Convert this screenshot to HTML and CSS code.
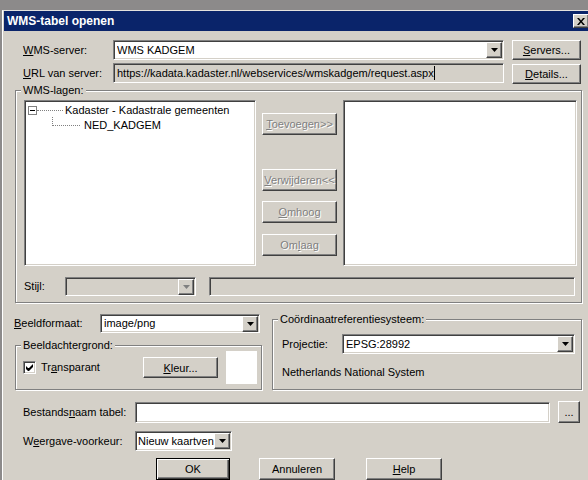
FILE: index.html
```html
<!DOCTYPE html>
<html>
<head>
<meta charset="utf-8">
<link rel="stylesheet" href="styles.css">
</head>
<body>
<div class="dialog">
  <div class="titlebar">
    <span class="title">WMS-tabel openen</span>
    <span class="btn close"><svg width="8" height="7" viewBox="0 0 8 7"><path d="M0 0h2l2 2.5 2-2.5h2l-3 3.5 3 3.5h-2l-2-2.5-2 2.5h-2l3-3.5z" fill="#000"/></svg></span>
  </div>
  <div class="content">
    <div class="row row-server">
      <span class="lbl w-top"><u>W</u>MS-server:</span>
      <div class="field combo w-top-field h20"><span class="val">WMS KADGEM</span><span class="btn arrow"><svg width="7" height="4"><path d="M0 0h7l-3.5 4z" fill="#000"/></svg></span></div>
      <div class="btn side h20"><u>S</u>ervers...</div>
    </div>
    <div class="row row-url">
      <span class="lbl w-top h20"><u>U</u>RL van server:</span>
      <div class="field ro w-top-field h20"><span class="val">https://kadata.kadaster.nl/webservices/wmskadgem/request.aspx</span><span class="caret"></span></div>
      <div class="btn side h20 details"><u>D</u>etails...</div>
    </div>

    <div class="group g-wms">
      <div class="legend">WMS-lagen:</div>
      <div class="wms-main">
        <div class="field tree">
          <div class="node n1"><span class="expander"><span class="minus"></span></span><span class="hline"></span><span class="ntext">Kadaster - Kadastrale gemeenten</span></div>
          <div class="node n2"><span class="elbow"></span><span class="ntext">NED_KADGEM</span></div>
        </div>
        <div class="btncol">
          <div class="btn dis b-add"><span><u>T</u>oevoegen&gt;&gt;</span></div>
          <div class="btn dis b-rem"><span><u>V</u>erwijderen&lt;&lt;</span></div>
          <div class="btn dis b-up"><span><u>O</u>mhoog</span></div>
          <div class="btn dis b-down"><span>Om<u>l</u>aag</span></div>
        </div>
        <div class="field list"></div>
      </div>
      <div class="row stijl-row">
        <span class="lbl w-stijl">Sti<u>j</u>l:</span>
        <div class="field combo disabled w-stijl-combo h19"><span class="val"></span><span class="btn arrow"><svg width="7" height="4"><path d="M0 0h7l-3.5 4z" fill="#808080"/></svg></span></div>
        <div class="field ro w-stijl-text h19"></div>
      </div>
    </div>

    <div class="lower">
      <div class="leftcol">
        <div class="row fmt-row">
          <span class="lbl w-fmt"><u>B</u>eeldformaat:</span>
          <div class="field combo w-fmt-combo h19"><span class="val">image/png</span><span class="btn arrow"><svg width="7" height="4"><path d="M0 0h7l-3.5 4z" fill="#000"/></svg></span></div>
        </div>
        <div class="group g-bg">
          <div class="legend">Beeldachtergrond:</div>
          <div class="row bg-row">
            <span class="check"><svg width="7" height="7" viewBox="0 0 7 7"><path d="M0 2v3l2 2h1l4-4v-3l-4 4h-1z" fill="#000"/></svg></span>
            <span class="lbl w-transp">Tr<u>a</u>nsparant</span>
            <div class="btn kleur"><u>K</u>leur...</div>
            <span class="swatch"></span>
          </div>
        </div>
      </div>
      <div class="group g-crs">
        <div class="legend">Coördinaatreferentiesysteem:</div>
        <div class="row proj-row">
          <span class="lbl w-proj">Projectie:</span>
          <div class="field combo w-proj-combo h20"><span class="val">EPSG:28992</span><span class="btn arrow"><svg width="7" height="4"><path d="M0 0h7l-3.5 4z" fill="#000"/></svg></span></div>
        </div>
        <div class="crs-name">Netherlands National System</div>
      </div>
    </div>

    <div class="row file-row">
      <span class="lbl w-bottom">Bestands<u>n</u>aam tabel:</span>
      <div class="field w-file h21"></div>
      <div class="btn dots">...</div>
    </div>
    <div class="row view-row">
      <span class="lbl w-bottom">W<u>e</u>ergave-voorkeur:</span>
      <div class="field combo w-view h20"><span class="val">Nieuw kaartven</span><span class="btn arrow"><svg width="7" height="4"><path d="M0 0h7l-3.5 4z" fill="#000"/></svg></span></div>
    </div>
    <div class="row action-row">
      <div class="btn default b-ok">OK</div>
      <div class="btn b-cancel">Annuleren</div>
      <div class="btn b-help"><u>H</u>elp</div>
    </div>
  </div>
</div>
</body>
</html>
```
FILE: styles.css
```css
* { box-sizing: border-box; }
html, body { margin: 0; padding: 0; }
body {
  width: 588px;
  height: 480px;
  overflow: hidden;
  background: #8c8a8a;
  font-family: "Liberation Sans", Arial, sans-serif;
  font-size: 11px;
  color: #000;
}
u { text-decoration: underline; text-underline-offset: 1px; }

.dialog {
  margin: 10px 0 0 2px;
  width: 600px;
  height: 470px;
  background: #d4d0c8;
  border-top: 1px solid #e4e2de;
  border-left: 1px solid #fff;
}
.titlebar {
  margin-left: 1px;
  width: 587px;
  height: 20px;
  background: #0a246a;
  color: #fff;
  font-weight: bold;
  font-size: 12px;
  display: flex;
  align-items: center;
  justify-content: space-between;
  padding-left: 3px;
}
.close {
  width: 16px;
  height: 14px;
  margin-right: 2px;
}

.content { padding-top: 9px; }
.row { display: flex; align-items: center; }
.lbl { white-space: nowrap; line-height: 13px; }

/* raised button */
.btn {
  background: #d4d0c8;
  border: 1px solid;
  border-color: #fff #404040 #404040 #fff;
  box-shadow: inset -1px -1px 0 #808080;
  display: flex;
  align-items: center;
  justify-content: center;
  white-space: nowrap;
}
.btn.default {
  border: 1px solid #000;
  box-shadow: inset 1px 1px 0 #fff, inset -1px -1px 0 #404040, inset -2px -2px 0 #808080;
}
.btn.dis { color: #808080; text-shadow: 1px 1px 0 #fff; }

/* sunken field */
.field {
  background: #fff;
  border: 1px solid;
  border-color: #808080 #fff #fff #808080;
  box-shadow: inset 1px 1px 0 #404040, inset -1px -1px 0 #d4d0c8;
  display: flex;
  align-items: center;
  padding: 0 1px 0 3px;
  overflow: hidden;
}
.field.ro, .field.disabled { background: #d4d0c8; }
.val { flex: 1; white-space: nowrap; overflow: hidden; line-height: 13px; }
.arrow { width: 16px; height: 16px; flex: none; }
.caret { width: 1px; height: 14px; background: #000; flex: none; margin-right: auto; }
.field.ro .val { flex: none; }

.h19 { height: 19px; }
.h20 { height: 20px; }
.h21 { height: 21px; }

/* top rows */
.row-server { margin-left: 20px; height: 20px; }
.row-url { margin-left: 20px; margin-top: 3px; height: 21px; align-items: flex-start; }
.row-url .lbl { line-height: 20px; }
.w-top { width: 90px; }
.w-top-field { width: 391px; }
.side { width: 69px; margin-left: 8px; }
.details { margin-top: 1px; }

/* group boxes */
.group {
  border: 1px solid #808080;
  box-shadow: inset 1px 1px 0 #fff, 1px 1px 0 #fff;
}
.legend {
  width: fit-content;
  margin: -7px 0 0 5px;
  padding: 0 2px;
  line-height: 13px;
  background: #d4d0c8;
  white-space: nowrap;
}

.g-wms {
  margin: 6px 0 0 12px;
  width: 567px;
  padding-bottom: 6px;
}
.wms-main { display: flex; margin: 3px 0 0 8px; }
.tree {
  width: 232px;
  height: 166px;
  display: block;
  padding: 0;
}
.list { width: 234px; height: 166px; margin-left: 6px; }
.btncol { width: 75px; margin-left: 6px; display: flex; flex-direction: column; }
.btncol .btn { height: 22px; }
.b-add { margin-top: 13px; }
.b-rem { margin-top: 34px; }
.b-up { margin-top: 10px; }
.b-down { margin-top: 11px; }

.node { display: flex; align-items: center; height: 16px; white-space: nowrap; }
.n1 { margin-top: 1px; }
.n2 { margin-top: -1px; align-items: flex-start; }
.expander {
  width: 9px; height: 9px;
  margin-left: 3px;
  border: 1px solid #808080;
  background: #fff;
  display: flex; align-items: center; justify-content: center;
  flex: none;
}
.minus { width: 5px; height: 1px; background: #000; }
.hline { width: 26px; border-top: 1px dotted #808080; height: 0; }
.n1 .ntext { margin-left: 2px; line-height: 13px; }
.elbow {
  width: 28px; height: 9px;
  margin-left: 27px;
  border-left: 1px dotted #808080;
  border-bottom: 1px dotted #808080;
  flex: none;
}
.n2 .ntext { margin-left: 4px; line-height: 16px; }

.stijl-row { margin: 11px 0 0 8px; height: 19px; }
.w-stijl { width: 41px; }
.w-stijl-combo { width: 131px; }
.w-stijl-text { width: 366px; margin-left: 13px; }

/* lower area */
.lower { display: flex; align-items: flex-start; margin-top: 11px; }
.leftcol { margin-left: 11px; width: 248px; }
.fmt-row { height: 19px; }
.w-fmt { width: 86px; }
.w-fmt-combo { width: 160px; }
.g-bg { margin: 12px 0 0 1px; width: 247px; padding-bottom: 5px; }
.bg-row { margin: -1px 0 0 7px; height: 33px; }
.check {
  width: 13px; height: 13px;
  background: #fff;
  border: 1px solid;
  border-color: #808080 #fff #fff #808080;
  box-shadow: inset 1px 1px 0 #404040, inset -1px -1px 0 #d4d0c8;
  display: flex; align-items: center; justify-content: center;
  flex: none;
}
.w-transp { width: 102px; margin-left: 5px; }
.kleur { width: 75px; height: 21px; }
.swatch { width: 31px; height: 33px; background: #fff; margin-left: 8px; }

.g-crs { margin: 5px 0 0 10px; width: 310px; padding-bottom: 10px; }
.proj-row { margin: 8px 0 0 9px; height: 20px; }
.w-proj { width: 60px; }
.w-proj-combo { width: 233px; }
.crs-name { margin: 12px 0 0 9px; line-height: 13px; }

/* bottom */
.file-row { margin: 11px 0 0 20px; height: 22px; align-items: flex-start; }
.file-row .lbl { line-height: 22px; }
.w-bottom { width: 112px; }
.w-file { width: 415px; margin-top: 1px; }
.dots { width: 22px; height: 22px; margin-left: 8px; }
.view-row { margin: 8px 0 0 20px; height: 20px; }
.w-view { width: 97px; padding-left: 2px; }

.action-row { margin: 7px 0 0 153px; height: 22px; }
.action-row .btn { height: 22px; }
.b-ok { width: 74px; }
.b-cancel { width: 76px; margin-left: 29px; }
.b-help { width: 76px; margin-left: 31px; }
```
